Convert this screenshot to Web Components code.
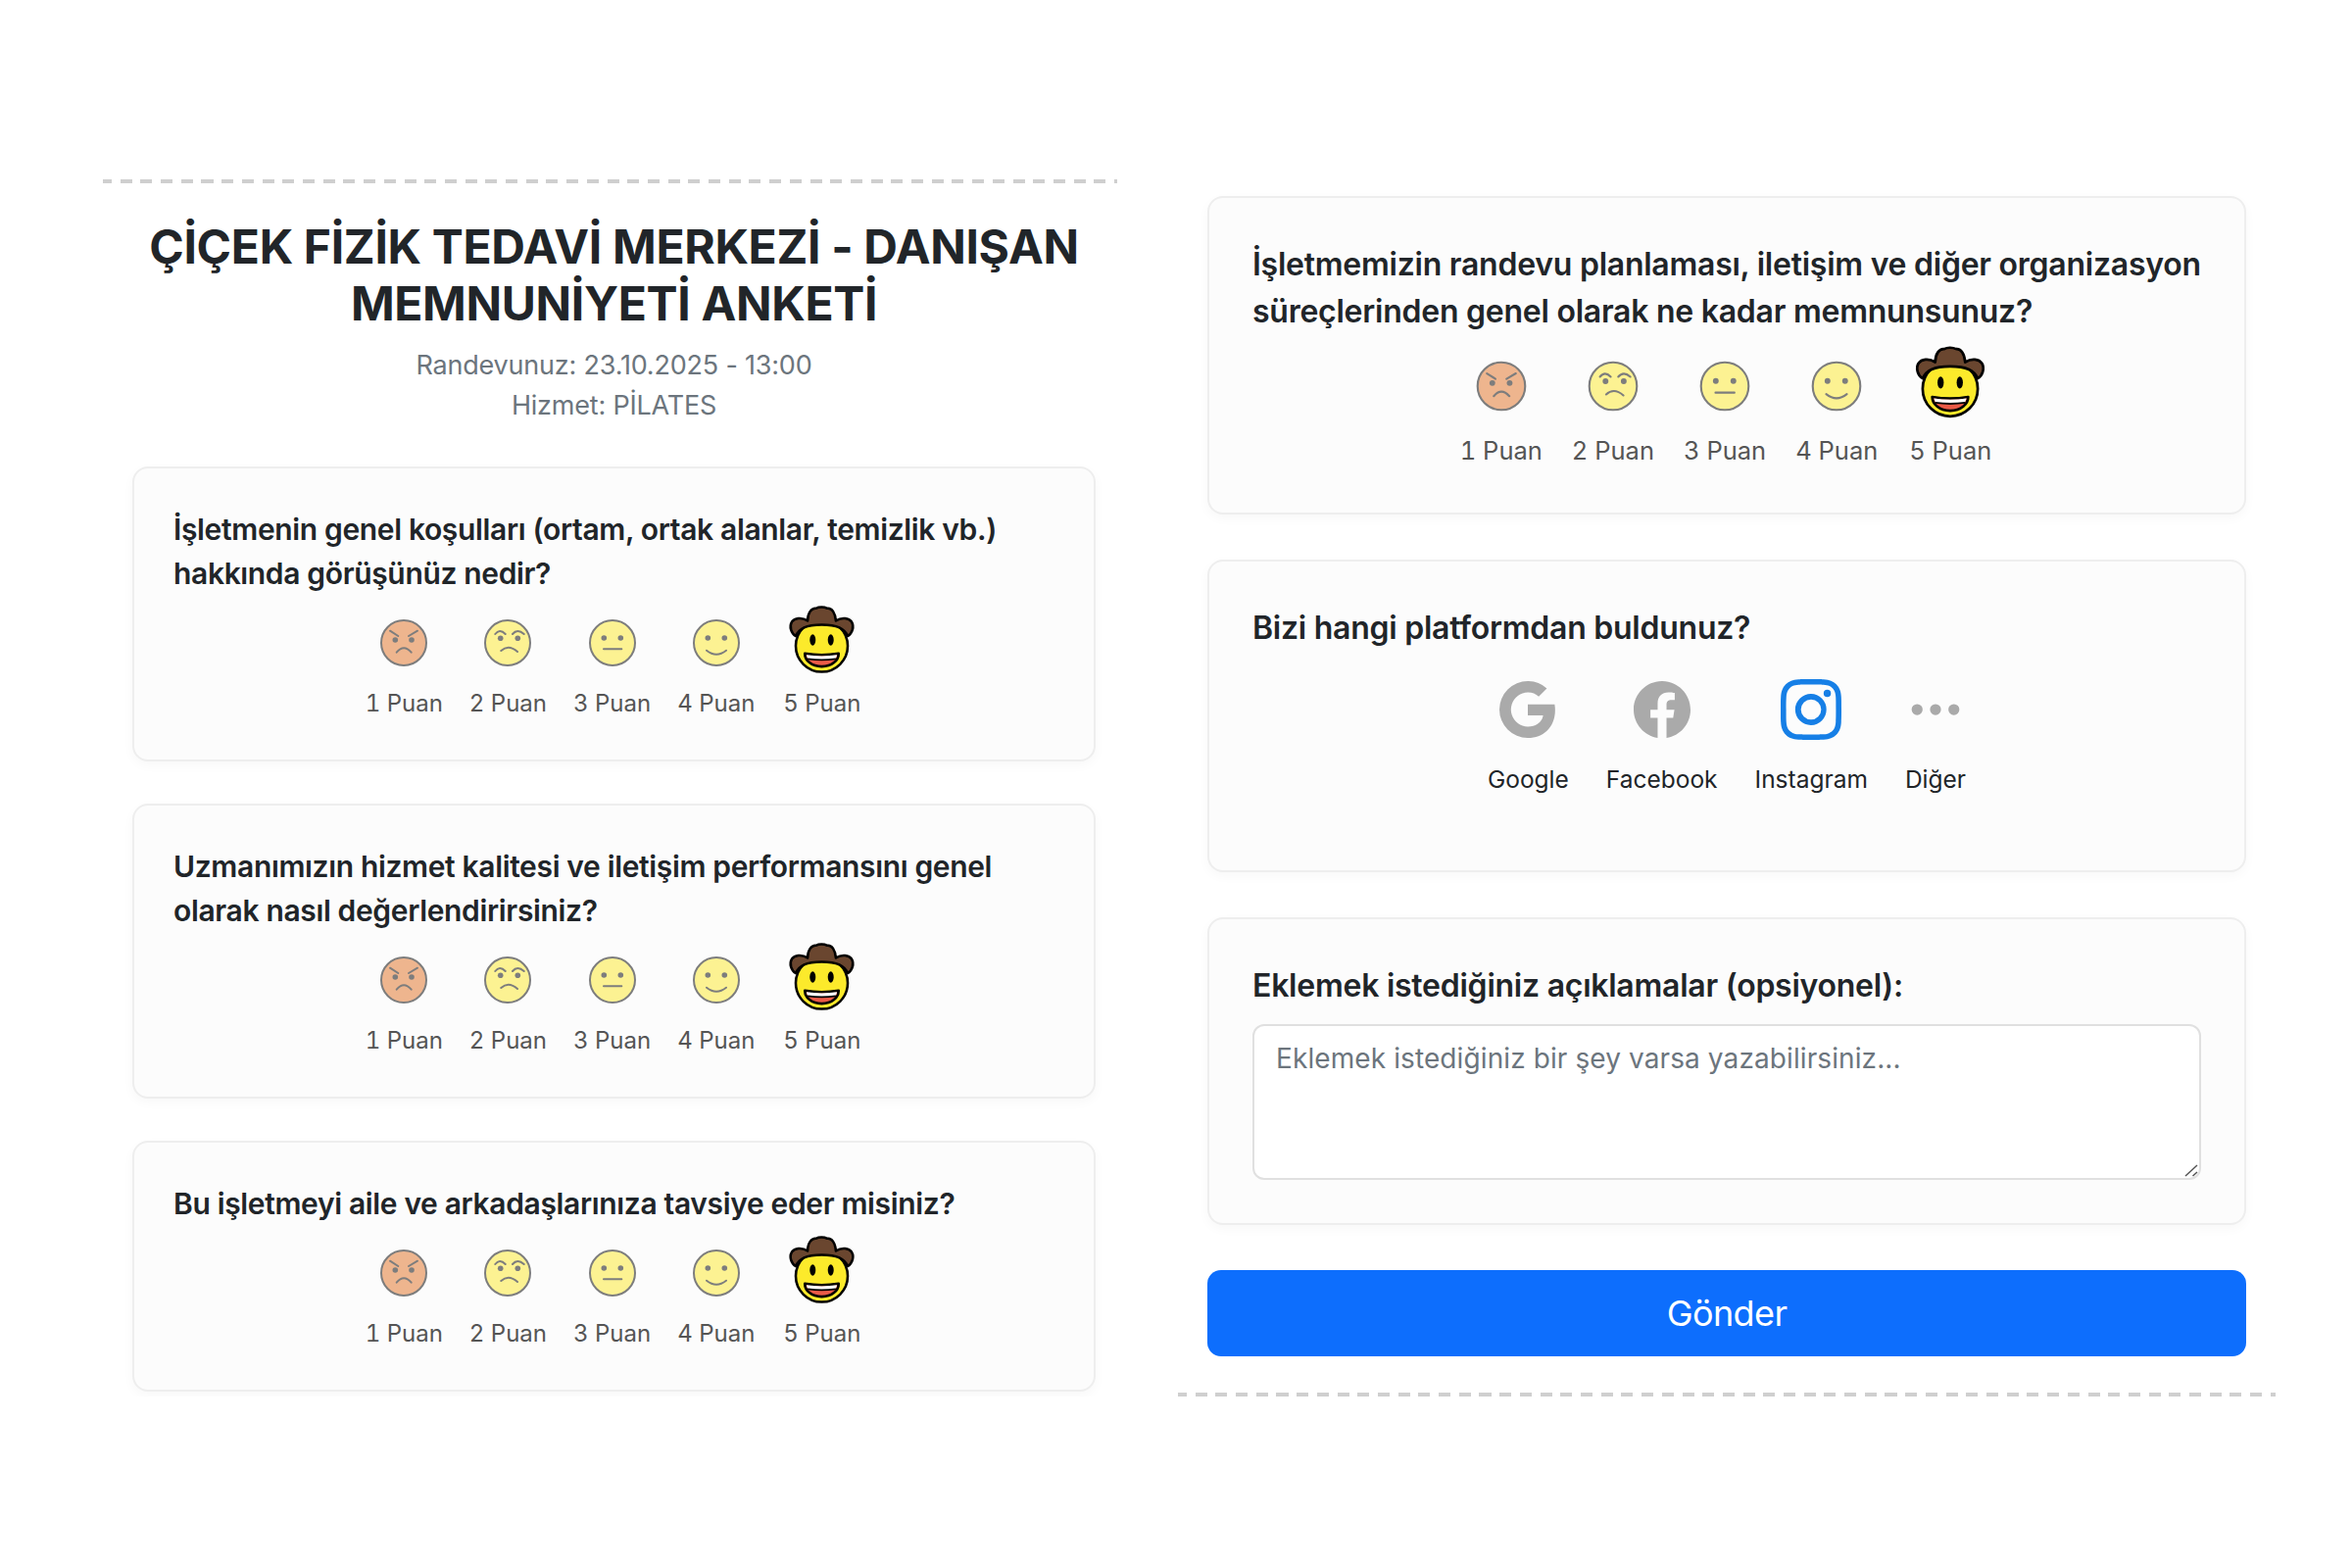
<!DOCTYPE html>
<html lang="tr">
<head>
<meta charset="utf-8">
<title>Anket</title>
<style>
  html, body { margin: 0; background: #fff; }
  body { font-family: Inter, "Liberation Sans", sans-serif; color: #212529; }
  .page { display: flex; align-items: flex-start; gap: 62px; padding: 183px 0 0 105px; }
</style>
</head>
<body>
<div class="page">
  <survey-column side="top">
    <survey-header>
      <span slot="title">ÇİÇEK FİZİK TEDAVİ MERKEZİ - DANIŞAN MEMNUNİYETİ ANKETİ</span>
      <span>Randevunuz: 23.10.2025 - 13:00</span>
      <span>Hizmet: PİLATES</span>
    </survey-header>
    <question-card>
      <span slot="question">İşletmenin genel koşulları (ortam, ortak alanlar, temizlik vb.) hakkında görüşünüz nedir?</span>
      <rating-row></rating-row>
    </question-card>
    <question-card>
      <span slot="question">Uzmanımızın hizmet kalitesi ve iletişim performansını genel olarak nasıl değerlendirirsiniz?</span>
      <rating-row></rating-row>
    </question-card>
    <question-card>
      <span slot="question">Bu işletmeyi aile ve arkadaşlarınıza tavsiye eder misiniz?</span>
      <rating-row></rating-row>
    </question-card>
  </survey-column>

  <survey-column side="bottom">
    <question-card large>
      <span slot="question">İşletmemizin randevu planlaması, iletişim ve diğer organizasyon süreçlerinden genel olarak ne kadar memnunsunuz?</span>
      <rating-row large></rating-row>
    </question-card>
    <question-card large>
      <span slot="question">Bizi hangi platformdan buldunuz?</span>
      <platform-row></platform-row>
    </question-card>
    <question-card large>
      <span slot="question">Eklemek istediğiniz açıklamalar (opsiyonel):</span>
      <comment-box></comment-box>
    </question-card>
    <submit-button>Gönder</submit-button>
  </survey-column>
</div>

<script>
  // openmoji style faces, all on a 72 unit box
  const face = (fill, inner) => `
    <svg viewBox="0 0 72 72" fill="none" stroke="#000" stroke-width="2" stroke-linecap="round">
      <g opacity=".5">
        <circle cx="36" cy="36" r="23" fill="${fill}"/>
        ${inner}
      </g>
    </svg>`;
  const eyes = (x1, x2, y) => `<circle cx="${x1}" cy="${y}" r="2.800" fill="#000" stroke="none"/><circle cx="${x2}" cy="${y}" r="2.800" fill="#000" stroke="none"/>`;

  const FACES = [
    face('#e27022', `${eyes(27.3, 44, 33)}<path d="M22 23.700l8.300 5.300M50 23.700L41 29M28.700 45.700Q36 37 43.700 45.700"/>`),
    face('#fcea2b', `${eyes(28.700, 46.300, 31.300)}<path d="M23.300 27Q28 21 33.700 27M41 27Q46 21 52.700 27M29.300 44Q37 37 46 45"/>`),
    face('#fcea2b', `${eyes(27.3, 44.300, 31)}<path d="M27 42.300h18.300"/>`),
    face('#fcea2b', `${eyes(27.3, 44.300, 31)}<path d="M26 43.700Q36 51.700 46 43.700"/>`),
    `<svg class="star" viewBox="0 0 72 72" stroke="#000" stroke-width="2.200" stroke-linejoin="round">
      <circle cx="36" cy="38.200" r="23" fill="#fcea2b"/>
      <path fill="#6a462f" d="M13 29.500C9 27.500 7 21 9.500 17c2.500-3.500 8.500-4.500 14-1 0-7 3.500-11.500 7.500-11 2.500-1.500 7-1.500 10 0 4-.5 7 4 7.500 11 5.500-3.500 11.500-2.500 14 1 2.500 4 .5 10.500-3.500 12.500-3-6.500-9-10-23-10s-20 3.500-23 10z"/>
      <ellipse cx="28" cy="33" rx="2.600" ry="5" fill="#000" stroke="none"/>
      <ellipse cx="44" cy="33" rx="2.600" ry="5" fill="#000" stroke="none"/>
      <path fill="#ea5a47" d="M21 45c9 1.500 21 1.500 30 0 0 6-6 11.500-15 11.500S21 51 21 45z"/>
      <path fill="#fff" stroke="none" d="M22.500 46.300c9 1.300 18 1.300 27 0-.3 1.500-.8 2.500-1.500 3.400-8 1.200-16 1.200-24 0-.7-.9-1.200-1.900-1.500-3.400z"/>
      <path fill="none" stroke-width="1.500" d="M23.500 49.800c8 1.200 17 1.200 25 0"/>
    </svg>`
  ];

  const PLATFORMS = [
    ['Google', 'M15.545 6.558a9.42 9.42 0 0 1 .139 1.626c0 2.434-.87 4.492-2.384 5.885h.002C11.978 15.292 10.158 16 8 16A8 8 0 1 1 8 0a7.689 7.689 0 0 1 5.352 2.082l-2.284 2.284A4.347 4.347 0 0 0 8 3.166c-2.087 0-3.860 1.408-4.492 3.304a4.792 4.792 0 0 0 0 3.063h.003c.635 1.893 2.405 3.301 4.492 3.301 1.078 0 2.004-.276 2.722-.764h-.003a3.702 3.702 0 0 0 1.599-2.431H8v-3.080h7.545z'],
    ['Facebook', 'M16 8.049c0-4.446-3.582-8.050-8-8.050C3.580 0-.002 3.603-.002 8.050c0 4.017 2.926 7.347 6.750 7.951v-5.625h-2.030V8.050H6.750V6.275c0-2.017 1.195-3.131 3.022-3.131.876 0 1.791.157 1.791.157v1.980h-1.009c-.993 0-1.303.621-1.303 1.258v1.510h2.218l-.354 2.326H9.250V16c3.824-.604 6.750-3.934 6.750-7.951z'],
    ['Instagram', 'M8 0C5.829 0 5.556.01 4.703.048 3.850.088 3.269.222 2.760.42a3.917 3.917 0 0 0-1.417.923A3.927 3.927 0 0 0 .42 2.760C.222 3.268.087 3.850.048 4.700.01 5.555 0 5.827 0 8.001c0 2.172.01 2.444.048 3.297.04.852.174 1.433.372 1.942.205.526.478.972.923 1.417.444.445.89.719 1.416.923.51.198 1.090.333 1.942.372C5.555 15.990 5.827 16 8 16s2.444-.01 3.298-.048c.851-.04 1.434-.174 1.943-.372a3.916 3.916 0 0 0 1.416-.923c.445-.445.718-.891.923-1.417.197-.509.332-1.090.372-1.942C15.990 10.445 16 10.173 16 8s-.01-2.445-.048-3.299c-.04-.851-.175-1.433-.372-1.941a3.926 3.926 0 0 0-.923-1.417A3.911 3.911 0 0 0 13.240.42c-.51-.198-1.092-.333-1.943-.372C10.443.01 10.172 0 7.998 0h.003zm-.717 1.442h.718c2.136 0 2.389.007 3.232.046.78.035 1.204.166 1.486.275.373.145.64.319.92.599.28.28.453.546.598.92.11.281.24.705.275 1.485.039.843.047 1.096.047 3.231s-.008 2.389-.047 3.232c-.035.78-.166 1.203-.275 1.485a2.470 2.470 0 0 1-.599.919c-.28.28-.546.453-.92.598-.28.11-.704.24-1.485.276-.843.038-1.096.047-3.232.047s-2.390-.009-3.233-.047c-.78-.036-1.203-.166-1.485-.276a2.478 2.478 0 0 1-.92-.598 2.480 2.480 0 0 1-.6-.92c-.109-.281-.24-.705-.275-1.485-.038-.843-.046-1.096-.046-3.233 0-2.136.008-2.388.046-3.231.036-.78.166-1.204.276-1.486.145-.373.319-.64.599-.92.28-.28.546-.453.92-.598.282-.11.705-.24 1.485-.276.738-.034 1.024-.044 2.515-.045v.002zm4.988 1.328a.96.96 0 1 0 0 1.920.96.96 0 0 0 0-1.920zm-4.270 1.122a4.109 4.109 0 1 0 0 8.217 4.109 4.109 0 0 0 0-8.217zm0 1.441a2.667 2.667 0 1 1 0 5.334 2.667 2.667 0 0 1 0-5.334z'],
    ['Diğer', 'M3 9.500a1.500 1.500 0 1 1 0-3 1.500 1.500 0 0 1 0 3zm5 0a1.500 1.500 0 1 1 0-3 1.500 1.500 0 0 1 0 3zm5 0a1.500 1.500 0 1 1 0-3 1.500 1.500 0 0 1 0 3z']
  ];

  const DASHES = 'repeating-linear-gradient(90deg, #cfcfcf 0 12px, transparent 12px 20.700px)';

  class SurveyColumn extends HTMLElement {
    constructor() {
      super();
      this.attachShadow({mode: 'open'}).innerHTML = `
        <style>
          :host { display: flex; flex-direction: column; box-sizing: border-box; }
          :host([side="top"]) { width: 1035px; background: ${DASHES} -3px 0 / 2000px 4px repeat-x; padding: 4px 22px 0 30px; gap: 43px; }
          :host([side="bottom"]) { width: 1120px; margin-top: 17px; background: ${DASHES} -3px 100% / 2000px 4px repeat-x; padding: 0 30px 41px; gap: 46px; }
        </style>
        <slot></slot>`;
    }
  }

  class SurveyHeader extends HTMLElement {
    constructor() {
      super();
      this.attachShadow({mode: 'open'}).innerHTML = `
        <style>
          :host { display: flex; flex-direction: column; align-items: center; text-align: center; padding-top: 36px; margin-bottom: -1px; }
          h1 { margin: 0 0 13px; font: 700 48px/58px Inter, sans-serif; letter-spacing: -.33px; color: #212529; }
          .meta { display: flex; flex-direction: column; align-items: center; font: 400 27px/41px Inter, sans-serif; letter-spacing: -.2px; color: #6c757d; }
        </style>
        <h1><slot name="title"></slot></h1>
        <div class="meta"><slot></slot></div>`;
    }
  }

  class QuestionCard extends HTMLElement {
    constructor() {
      super();
      this.attachShadow({mode: 'open'}).innerHTML = `
        <style>
          :host { display: block; box-sizing: border-box; padding: 40px 40px 39px; background: #fcfcfc; border: 2px solid #eee; border-radius: 16px; box-shadow: 0 4px 12px rgba(0,0,0,.03); }
          :host([large]) { padding: 44px; }
          .q { font: 600 30px/45px Inter, sans-serif; letter-spacing: -.35px; color: #212529; }
          :host([large]) .q { font-size: 32px; line-height: 48px; letter-spacing: -.25px; }
        </style>
        <div class="q"><slot name="question"></slot></div>
        <slot></slot>`;
    }
  }

  class RatingRow extends HTMLElement {
    constructor() {
      super();
      const items = FACES.map((svg, i) => `
        <div class="opt"><div class="ico">${svg}</div><span>${i + 1} Puan</span></div>`).join('');
      this.attachShadow({mode: 'open'}).innerHTML = `
        <style>
          :host { display: flex; justify-content: center; gap: 27px; margin-top: 12px; color: #555; font: 400 24px/36px Inter, sans-serif; font-feature-settings: "tnum"; }
          :host([large]) { gap: 30px; margin-top: 14px; font-size: 25.500px; line-height: 39px; }
          .opt { display: flex; flex-direction: column; align-items: center; }
          .ico { height: 72px; display: flex; justify-content: center; align-items: center; margin-bottom: 8px; }
          svg { width: 72px; height: 72px; flex: none; overflow: visible; }
          svg.star { width: 83px; height: 83px; }
          :host([large]) .ico { height: 76px; }
          :host([large]) svg { width: 76px; height: 76px; }
          :host([large]) svg.star { width: 88px; height: 88px; }
        </style>
        ${items}`;
    }
  }

  class PlatformRow extends HTMLElement {
    constructor() {
      super();
      const items = PLATFORMS.map(([name, d]) => `
        <div class="opt ${name === 'Instagram' ? 'on' : ''} ${name === 'Diğer' ? 'more' : ''}">
          <div class="ico"><svg viewBox="0 0 16 16" fill="currentColor"><path d="${d}"/></svg></div>
          <span>${name}</span>
        </div>`).join('');
      this.attachShadow({mode: 'open'}).innerHTML = `
        <style>
          :host { display: flex; justify-content: center; gap: 38px; margin: 26px 0 29px; color: #212529; font: 400 24.500px/39px Inter, sans-serif; }
          .opt { display: flex; flex-direction: column; align-items: center; }
          .ico { height: 66px; display: flex; align-items: center; margin-bottom: 19px; color: #aaa; }
          svg { width: 58px; height: 58px; }
          .more svg { width: 60px; height: 60px; }
          .on .ico { color: #167fe6; }
          .on svg { width: 62px; height: 62px; }
        </style>
        ${items}`;
    }
  }

  class CommentBox extends HTMLElement {
    constructor() {
      super();
      this.attachShadow({mode: 'open'}).innerHTML = `
        <style>
          :host { display: block; position: relative; margin-top: 15px; }
          textarea { display: block; box-sizing: border-box; width: 100%; height: 159px; padding: 12px 22px; background: #fff; border: 2px solid #e0e0e0; border-radius: 12px; font: 400 28px/42px Inter, sans-serif; letter-spacing: .1px; outline: none; resize: none; }
          textarea::placeholder { color: #6c757d; opacity: 1; }
          svg { position: absolute; right: 2px; bottom: 2px; width: 16px; height: 16px; pointer-events: none; }
        </style>
        <textarea placeholder="Eklemek istediğiniz bir şey varsa yazabilirsiniz..."></textarea>
        <svg viewBox="0 0 16 16" fill="none" stroke="#555" stroke-width="1.500"><path d="M2 14L14 3M9.500 14L14 10"/></svg>`;
    }
  }

  class SubmitButton extends HTMLElement {
    constructor() {
      super();
      this.attachShadow({mode: 'open'}).innerHTML = `
        <style>
          :host { display: block; }
          button { display: block; width: 100%; height: 88px; background: #0d6efd; border: 0; border-radius: 14px; color: #fff; font: 400 36px/1 Inter, sans-serif; letter-spacing: -.6px; }
        </style>
        <button type="button"><slot></slot></button>`;
    }
  }

  customElements.define('survey-column', SurveyColumn);
  customElements.define('survey-header', SurveyHeader);
  customElements.define('question-card', QuestionCard);
  customElements.define('rating-row', RatingRow);
  customElements.define('platform-row', PlatformRow);
  customElements.define('comment-box', CommentBox);
  customElements.define('submit-button', SubmitButton);
</script>
</body>
</html>
